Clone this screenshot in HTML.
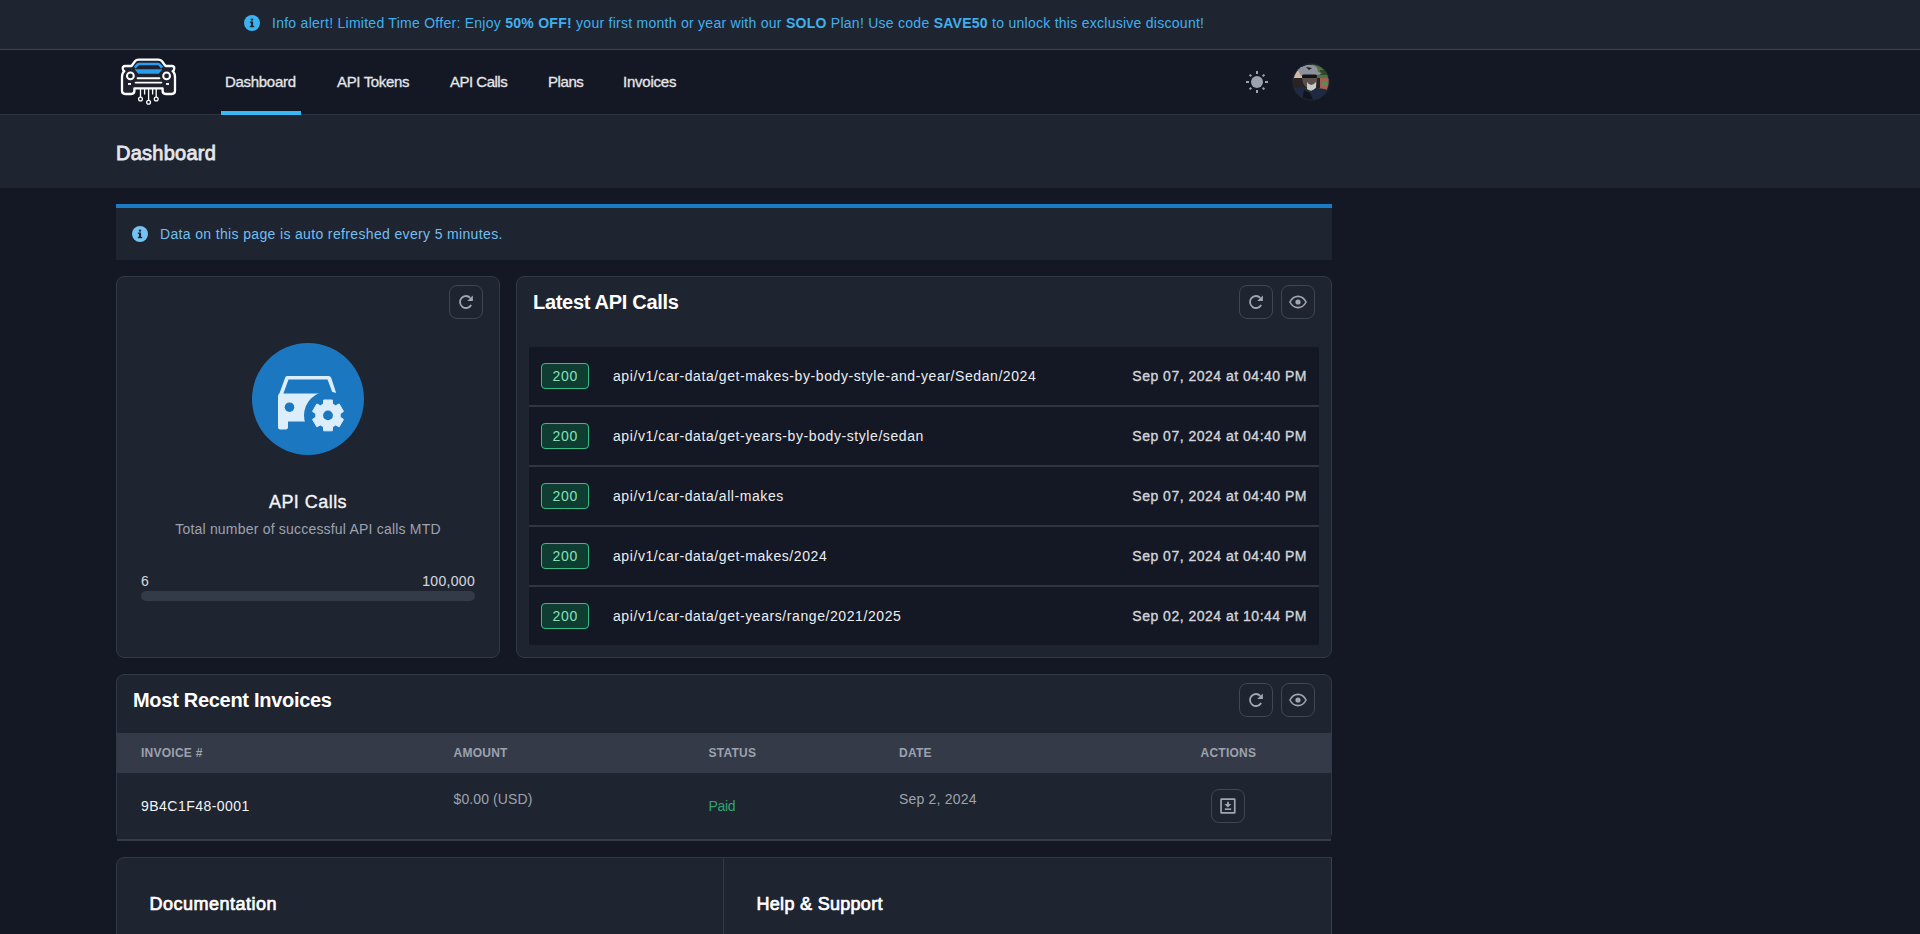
<!DOCTYPE html>
<html>
<head>
<meta charset="utf-8">
<style>
html,body{margin:0;padding:0;}
body{width:1920px;height:934px;overflow:hidden;background:#141824;font-family:"Liberation Sans",sans-serif;position:relative;}
.a{position:absolute;}
.t{position:absolute;white-space:pre;line-height:1;}
.banner{left:0;top:0;width:1920px;height:49px;background:#1f2431;}
.bline{left:0;top:49px;width:1920px;height:1px;background:#14507e;}
.nav{left:0;top:50px;width:1920px;height:64px;background:#141824;}
.nline{left:0;top:114px;width:1920px;height:1px;background:#2c323e;}
.phead{left:0;top:115px;width:1920px;height:73px;background:#1f2431;}
.card{position:absolute;background:#1f2431;border:1px solid #313846;border-radius:8px;box-sizing:border-box;}
.btn{position:absolute;width:34px;height:34px;box-sizing:border-box;border:1px solid #3f4754;border-radius:8px;}
.btn svg{position:absolute;left:7px;top:7px;}
.row{position:absolute;left:529px;width:790px;height:59px;background:#141824;}
.div{position:absolute;left:529px;width:790px;height:1px;background:#2f3543;}
.badge{position:absolute;left:541px;width:48px;height:26px;box-sizing:border-box;border:1px solid #36bd86;border-radius:4px;background:#0f3d32;}
.badge span{position:absolute;left:0;width:46px;text-align:center;top:5px;font-size:14px;line-height:1;color:#86e2b5;letter-spacing:0.8px;text-indent:0.6px;}
.path{font-size:14px;color:#eceef1;letter-spacing:0.58px;}
.date{font-size:14px;color:#d2d5db;letter-spacing:0.5px;-webkit-text-stroke:0.35px #d2d5db;}
</style>
</head>
<body>
<!-- top banner -->
<div class="a banner"></div>
<div class="a bline"></div>
<svg class="a" style="left:244px;top:15px" width="16" height="16" viewBox="0 0 16 16">
  <circle cx="8" cy="8" r="8" fill="#3cb3f0"/>
  <rect x="6.9" y="6.6" width="2.2" height="5" fill="#1f2431"/>
  <rect x="5.8" y="6.6" width="2" height="1.2" fill="#1f2431"/>
  <rect x="5.8" y="10.9" width="4.4" height="1.3" fill="#1f2431"/>
  <circle cx="8" cy="4.6" r="1.2" fill="#1f2431"/>
</svg>
<div class="t" style="left:272px;top:16px;font-size:14px;color:#3fb0ee;letter-spacing:0.267px">Info alert! Limited Time Offer: Enjoy <b>50% OFF!</b> your first month or year with our <b>SOLO</b> Plan! Use code <b>SAVE50</b> to unlock this exclusive discount!</div>

<!-- nav -->
<div class="a nav"></div>
<div class="a nline"></div>
<div class="a" style="left:221px;top:111px;width:80px;height:4px;background:#3ab7f5"></div>
<div class="t" style="left:225px;top:74px;font-size:15px;color:#e4e6ea;-webkit-text-stroke:0.3px #e4e6ea;letter-spacing:-0.3px">Dashboard</div>
<div class="t" style="left:337px;top:74px;font-size:15px;color:#e4e6ea;-webkit-text-stroke:0.3px #e4e6ea;letter-spacing:-0.35px">API Tokens</div>
<div class="t" style="left:450px;top:74px;font-size:15px;color:#e4e6ea;-webkit-text-stroke:0.3px #e4e6ea;letter-spacing:-0.5px">API Calls</div>
<div class="t" style="left:548px;top:74px;font-size:15px;color:#e4e6ea;-webkit-text-stroke:0.3px #e4e6ea;letter-spacing:-0.43px">Plans</div>
<div class="t" style="left:623px;top:74px;font-size:15px;color:#e4e6ea;-webkit-text-stroke:0.3px #e4e6ea;letter-spacing:-0.23px">Invoices</div>


<!-- logo -->
<svg class="a" style="left:116px;top:54px" width="66" height="54" viewBox="116 54 66 54">
  <path d="M131.5 66 L135 61.3 Q136.2 59.7 138.7 59.7 L158.3 59.7 Q160.8 59.7 162 61.3 L165.5 66 L171.8 66 Q174.3 66 174.3 68.4 Q174.3 70.2 172.6 71.2 Q175 73 175 77 L175 90.8 Q175 94 171.8 94 L165.6 94 Q162.6 94 162.6 90.8 L162.6 88.4 L134.4 88.4 L134.4 90.8 Q134.4 94 131.4 94 L125.2 94 Q122 94 122 90.8 L122 77 Q122 73 124.4 71.2 Q122.7 70.2 122.7 68.4 Q122.7 66 125.2 66 Z" fill="#1d222c" stroke="#ffffff" stroke-width="2.3" stroke-linejoin="round"/>
  <path d="M134.8 67.6 L137.6 64.6 Q138.2 64 139.2 64 L157.8 64 Q158.8 64 159.4 64.6 L162.2 67.6" fill="none" stroke="#2b9cf0" stroke-width="2.6"/>
  <path d="M134.6 69.2 L162.4 69.2 L158.8 73.8 L138.2 73.8 Z" fill="#2b9cf0"/>
  <circle cx="130.4" cy="75.9" r="3.4" fill="none" stroke="#fff" stroke-width="2"/>
  <circle cx="166.6" cy="75.9" r="3.4" fill="none" stroke="#fff" stroke-width="2"/>
  <line x1="137.6" y1="78.2" x2="159.4" y2="78.2" stroke="#fff" stroke-width="1.9" stroke-linecap="round"/>
  <line x1="135.6" y1="82.6" x2="161.4" y2="82.6" stroke="#fff" stroke-width="1.9" stroke-linecap="round"/>
  <rect x="128" y="83" width="3" height="1.9" fill="#fff"/>
  <rect x="166" y="83" width="3" height="1.9" fill="#fff"/>
  <g stroke="#fff" stroke-width="1.3" fill="none">
    <line x1="140.5" y1="89" x2="140.5" y2="97.2"/>
    <line x1="144.6" y1="89" x2="144.6" y2="94.5"/>
    <line x1="148.6" y1="89" x2="148.6" y2="100.4"/>
    <line x1="152.6" y1="89" x2="152.6" y2="94.5"/>
    <line x1="156.2" y1="89" x2="156.2" y2="97.2"/>
    <circle cx="140.5" cy="99" r="1.9"/>
    <circle cx="148.6" cy="102.2" r="1.9"/>
    <circle cx="156.2" cy="99" r="1.9"/>
  </g>
</svg>
<!-- sun -->
<svg class="a" style="left:1245px;top:70px" width="24" height="24" viewBox="-12 -12 24 24">
  <circle cx="0" cy="0" r="6" fill="#9ca3af"/>
  <g stroke="#9ca3af" stroke-width="2">
    <line x1="0" y1="-8" x2="0" y2="-11"/><line x1="0" y1="8" x2="0" y2="11"/>
    <line x1="-8" y1="0" x2="-11" y2="0"/><line x1="8" y1="0" x2="11" y2="0"/>
    <line x1="5.7" y1="-5.7" x2="7.4" y2="-7.4"/><line x1="-5.7" y1="-5.7" x2="-7.4" y2="-7.4"/>
    <line x1="5.7" y1="5.7" x2="7.4" y2="7.4"/><line x1="-5.7" y1="5.7" x2="-7.4" y2="7.4"/>
  </g>
</svg>
<!-- avatar -->
<svg class="a" style="left:1292px;top:63px" width="38" height="38" viewBox="0 0 38 38">
  <defs><clipPath id="av"><circle cx="19" cy="19" r="17.6"/></clipPath></defs>
  <circle cx="19" cy="19" r="18.8" fill="#1e2530"/>
  <g clip-path="url(#av)">
    <rect x="0" y="0" width="38" height="38" fill="#2e3b2c"/>
    <rect x="0" y="4" width="12" height="12" fill="#cdb9a4"/>
    <rect x="20" y="0" width="18" height="18" fill="#4f7444"/>
    <rect x="28" y="7" width="10" height="5" fill="#2f4a2a"/>
    <rect x="27" y="15" width="11" height="12" fill="#a25e52"/>
    <rect x="30" y="19" width="5" height="4" fill="#5d8a4f"/>
    <rect x="0" y="15" width="28" height="10" fill="#2a2224"/>
    <path d="M6 7 Q12 1 20 2 Q26 3 26 9 L30 10 Q28 12 24 12 L9 13 Z" fill="#8d919c"/>
    <path d="M14 4 L20 5 L17 7 Z" fill="#1a1a1e"/>
    <rect x="10" y="11.5" width="15" height="4" rx="1.5" fill="#141418"/>
    <path d="M10 15 L25 15 L25 21 Q23 26 19 26 Q13 25 11 20 Z" fill="#5a4f4c"/>
    <path d="M15 19 Q19 25 24 19 L24 25 Q20 30 15 26 Z" fill="#c9c9c6"/>
    <path d="M0 38 L1 27 Q7 23 12 24 L18 29 L24 25 Q32 25 38 28 L38 38 Z" fill="#1f2942"/>
    <path d="M10 38 L12 27 L18 30 L22 38 Z" fill="#121520"/>
  </g>
</svg>
<!-- page header -->
<div class="a phead"></div>
<div class="t" style="left:116px;top:142.6px;font-size:20px;color:#e5e7eb;letter-spacing:0.25px;-webkit-text-stroke:0.8px #e5e7eb">Dashboard</div>

<!-- info alert -->
<div class="a" style="left:116px;top:204px;width:1216px;height:56px;background:#1f2431"></div>
<div class="a" style="left:116px;top:204px;width:1216px;height:4px;background:#1a7bc6"></div>
<svg class="a" style="left:132px;top:226px" width="16" height="16" viewBox="0 0 16 16">
  <circle cx="8" cy="8" r="8" fill="#74c3f3"/>
  <rect x="6.9" y="6.6" width="2.2" height="5" fill="#1f2431"/>
  <rect x="5.8" y="6.6" width="2" height="1.2" fill="#1f2431"/>
  <rect x="5.8" y="10.9" width="4.4" height="1.3" fill="#1f2431"/>
  <circle cx="8" cy="4.6" r="1.2" fill="#1f2431"/>
</svg>
<div class="t" style="left:160px;top:227px;font-size:14px;color:#72bff0;letter-spacing:0.35px">Data on this page is auto refreshed every 5 minutes.</div>

<!-- card 1 -->
<div class="card" style="left:116px;top:276px;width:384px;height:382px"></div>
<div class="btn" style="left:449px;top:285px"><svg width="18" height="18" viewBox="0 0 18 18"><path d="M13.3 4.8 A6 6 0 1 0 14.2 12" fill="none" stroke="#a1a6b0" stroke-width="1.8"/><path d="M10.2 8.1 L15.9 8.1 L15.9 2.4 Z" fill="#a1a6b0"/></svg></div>
<svg class="a" style="left:252px;top:343px" width="112" height="112" viewBox="252 343 112 112">
  <defs>
    <clipPath id="bc"><circle cx="308" cy="399" r="56"/></clipPath>
    <mask id="carm">
      <rect x="252" y="343" width="112" height="112" fill="#fff"/>
      <circle cx="289.5" cy="407.2" r="4.8" fill="#000"/>
      <circle cx="328" cy="415.4" r="24" fill="#000"/>
    </mask>
  </defs>
  <circle cx="308" cy="399" r="56" fill="#1b78c0"/>
  <g mask="url(#carm)" fill="#dcedfb">
    <path d="M287 376 L328.5 376 Q330.5 376 331.3 378 L336.5 394 L333 394 L327.5 379.6 L288.5 379.6 L282.5 396 L278.5 396 L285 378 Q285.7 376 287 376 Z"/>
    <path d="M280 393.5 L334 393.5 L334 421.5 L288 421.5 L288 427 Q288 429.5 285.5 429.5 L280.5 429.5 Q278 429.5 278 427 L278 397 Q278 393.5 280 393.5 Z"/>
  </g>
  <path d="M323.39 404.00 L323.72 399.98 L332.28 399.98 L332.61 404.00 L335.57 405.71 L339.21 403.99 L343.49 411.39 L340.18 413.69 L340.18 417.11 L343.49 419.41 L339.21 426.81 L335.57 425.09 L332.61 426.80 L332.28 430.82 L323.72 430.82 L323.39 426.80 L320.43 425.09 L316.79 426.81 L312.51 419.41 L315.82 417.11 L315.82 413.69 L312.51 411.39 L316.79 403.99 L320.43 405.71 Z" fill="#dcedfb" stroke="#dcedfb" stroke-width="1" stroke-linejoin="round"/>
  <circle cx="328" cy="415.4" r="4.9" fill="#1b78c0"/>
</svg>
<div class="t" style="left:116px;width:384px;text-align:center;top:492.5px;font-size:18px;color:#f3f4f6;letter-spacing:0.45px;-webkit-text-stroke:0.35px #f3f4f6">API Calls</div>
<div class="t" style="left:116px;width:384px;text-align:center;top:522.3px;font-size:14px;color:#9ca3af;letter-spacing:0.2px">Total number of successful API calls MTD</div>
<div class="t" style="left:141px;top:574.3px;font-size:14px;color:#d1d5db;-webkit-text-stroke:0.1px #d1d5db">6</div>
<div class="t" style="left:375px;width:100px;text-align:right;top:574.3px;font-size:14px;color:#d1d5db;letter-spacing:0.3px;-webkit-text-stroke:0.1px #d1d5db">100,000</div>
<div class="a" style="left:141px;top:591px;width:334px;height:10px;border-radius:5px;background:#333a48"></div>
<!-- card 2 -->
<div class="card" style="left:516px;top:276px;width:816px;height:382px"></div>
<div class="t" style="left:533px;top:292px;font-size:20px;font-weight:700;color:#ffffff;letter-spacing:-0.3px">Latest API Calls</div>
<div class="btn" style="left:1239px;top:285px"><svg width="18" height="18" viewBox="0 0 18 18"><path d="M13.3 4.8 A6 6 0 1 0 14.2 12" fill="none" stroke="#a1a6b0" stroke-width="1.8"/><path d="M10.2 8.1 L15.9 8.1 L15.9 2.4 Z" fill="#a1a6b0"/></svg></div>
<div class="btn" style="left:1281px;top:285px"><svg width="18" height="18" viewBox="0 0 18 18"><path d="M0.9 9 C3 5 6 3.4 9 3.4 C12 3.4 15 5 17.1 9 C15 13 12 14.6 9 14.6 C6 14.6 3 13 0.9 9 Z" fill="none" stroke="#a1a6b0" stroke-width="1.6" stroke-linejoin="round"/><circle cx="9" cy="9" r="2.6" fill="#a1a6b0"/></svg></div>
<div class="row" style="top:347px;height:58px"></div>
<div class="div" style="top:405px;height:2px"></div>
<div class="badge" style="top:363px"><span>200</span></div>
<div class="t path" style="left:613px;top:369.15px">api/v1/car-data/get-makes-by-body-style-and-year/Sedan/2024</div>
<div class="t date" style="left:1007px;width:300px;text-align:right;top:369.15px">Sep 07, 2024 at 04:40 PM</div>
<div class="row" style="top:407px;height:58px"></div>
<div class="div" style="top:465px;height:2px"></div>
<div class="badge" style="top:423px"><span>200</span></div>
<div class="t path" style="left:613px;top:429.15px">api/v1/car-data/get-years-by-body-style/sedan</div>
<div class="t date" style="left:1007px;width:300px;text-align:right;top:429.15px">Sep 07, 2024 at 04:40 PM</div>
<div class="row" style="top:467px;height:58px"></div>
<div class="div" style="top:525px;height:2px"></div>
<div class="badge" style="top:483px"><span>200</span></div>
<div class="t path" style="left:613px;top:489.15px">api/v1/car-data/all-makes</div>
<div class="t date" style="left:1007px;width:300px;text-align:right;top:489.15px">Sep 07, 2024 at 04:40 PM</div>
<div class="row" style="top:527px;height:58px"></div>
<div class="div" style="top:585px;height:2px"></div>
<div class="badge" style="top:543px"><span>200</span></div>
<div class="t path" style="left:613px;top:549.15px">api/v1/car-data/get-makes/2024</div>
<div class="t date" style="left:1007px;width:300px;text-align:right;top:549.15px">Sep 07, 2024 at 04:40 PM</div>
<div class="row" style="top:587px;height:58px"></div>
<div class="badge" style="top:603px"><span>200</span></div>
<div class="t path" style="left:613px;top:609.15px">api/v1/car-data/get-years/range/2021/2025</div>
<div class="t date" style="left:1007px;width:300px;text-align:right;top:609.15px">Sep 02, 2024 at 10:44 PM</div>
<!-- card 3 -->
<div class="card" style="left:116px;top:674px;width:1216px;height:167px"></div>
<div class="a" style="left:117px;top:825px;width:1214px;height:14px;background:#1f2431"></div>
<div class="a" style="left:117px;top:839px;width:1214px;height:2px;background:#363d4a"></div>
<div class="t" style="left:133px;top:690.37px;font-size:20px;font-weight:700;color:#ffffff;letter-spacing:-0.29px">Most Recent Invoices</div>
<div class="btn" style="left:1239px;top:683px"><svg width="18" height="18" viewBox="0 0 18 18"><path d="M13.3 4.8 A6 6 0 1 0 14.2 12" fill="none" stroke="#a1a6b0" stroke-width="1.8"/><path d="M10.2 8.1 L15.9 8.1 L15.9 2.4 Z" fill="#a1a6b0"/></svg></div>
<div class="btn" style="left:1281px;top:683px"><svg width="18" height="18" viewBox="0 0 18 18"><path d="M0.9 9 C3 5 6 3.4 9 3.4 C12 3.4 15 5 17.1 9 C15 13 12 14.6 9 14.6 C6 14.6 3 13 0.9 9 Z" fill="none" stroke="#a1a6b0" stroke-width="1.6" stroke-linejoin="round"/><circle cx="9" cy="9" r="2.6" fill="#a1a6b0"/></svg></div>
<div class="a" style="left:117px;top:733px;width:1214px;height:40px;background:#343a48"></div>
<div class="t" style="left:141px;top:747.04px;font-size:12px;font-weight:700;color:#9ca3af;letter-spacing:0.25px">INVOICE #</div>
<div class="t" style="left:453.5px;top:747.04px;font-size:12px;font-weight:700;color:#9ca3af;letter-spacing:0.25px">AMOUNT</div>
<div class="t" style="left:708.5px;top:747.04px;font-size:12px;font-weight:700;color:#9ca3af;letter-spacing:0.25px">STATUS</div>
<div class="t" style="left:899px;top:747.04px;font-size:12px;font-weight:700;color:#9ca3af;letter-spacing:0.25px">DATE</div>
<div class="t" style="left:1200.5px;top:747.04px;font-size:12px;font-weight:700;color:#9ca3af;letter-spacing:0.25px">ACTIONS</div>
<div class="t" style="left:141px;top:799.05px;font-size:14px;color:#f3f4f6;letter-spacing:0.47px">9B4C1F48-0001</div>
<div class="t" style="left:453.5px;top:792.35px;font-size:14px;color:#9ca3af;letter-spacing:0.1px">$0.00 (USD)</div>
<div class="t" style="left:708.5px;top:799.35px;font-size:14px;color:#2fa66b;letter-spacing:-0.3px">Paid</div>
<div class="t" style="left:899px;top:792.35px;font-size:14px;color:#9ca3af;letter-spacing:0.2px">Sep 2, 2024</div>
<div class="btn" style="left:1211px;top:789px"><svg width="18" height="18" viewBox="0 0 18 18"><rect x="2.05" y="2.05" width="13.7" height="13.8" rx="0.4" fill="none" stroke="#a1a6b0" stroke-width="1.7"/><path d="M9 4.8 L9 8" stroke="#a1a6b0" stroke-width="1.8"/><path d="M5.4 7 L12.4 7 L8.9 10.4 Z" fill="#a1a6b0"/><rect x="5.8" y="11.4" width="6.4" height="1.6" fill="#a1a6b0"/></svg></div>
<!-- card 4 -->
<div class="card" style="left:116px;top:857px;width:1216px;height:120px"></div>
<div class="a" style="left:723px;top:858px;width:1px;height:80px;background:#313846"></div>
<div class="a" style="left:1316px;top:857px;width:16px;height:80px;background:#1f2431;border-top:1px solid #313846;border-right:1px solid #39404c;box-sizing:border-box"></div>
<div class="t" style="left:149.5px;top:894.66px;font-size:18px;color:#ffffff;letter-spacing:0.5px;-webkit-text-stroke:0.7px #fff">Documentation</div>
<div class="t" style="left:756.5px;top:894.86px;font-size:18px;color:#ffffff;letter-spacing:0.3px;-webkit-text-stroke:0.7px #fff">Help &amp; Support</div>
</body>
</html>
